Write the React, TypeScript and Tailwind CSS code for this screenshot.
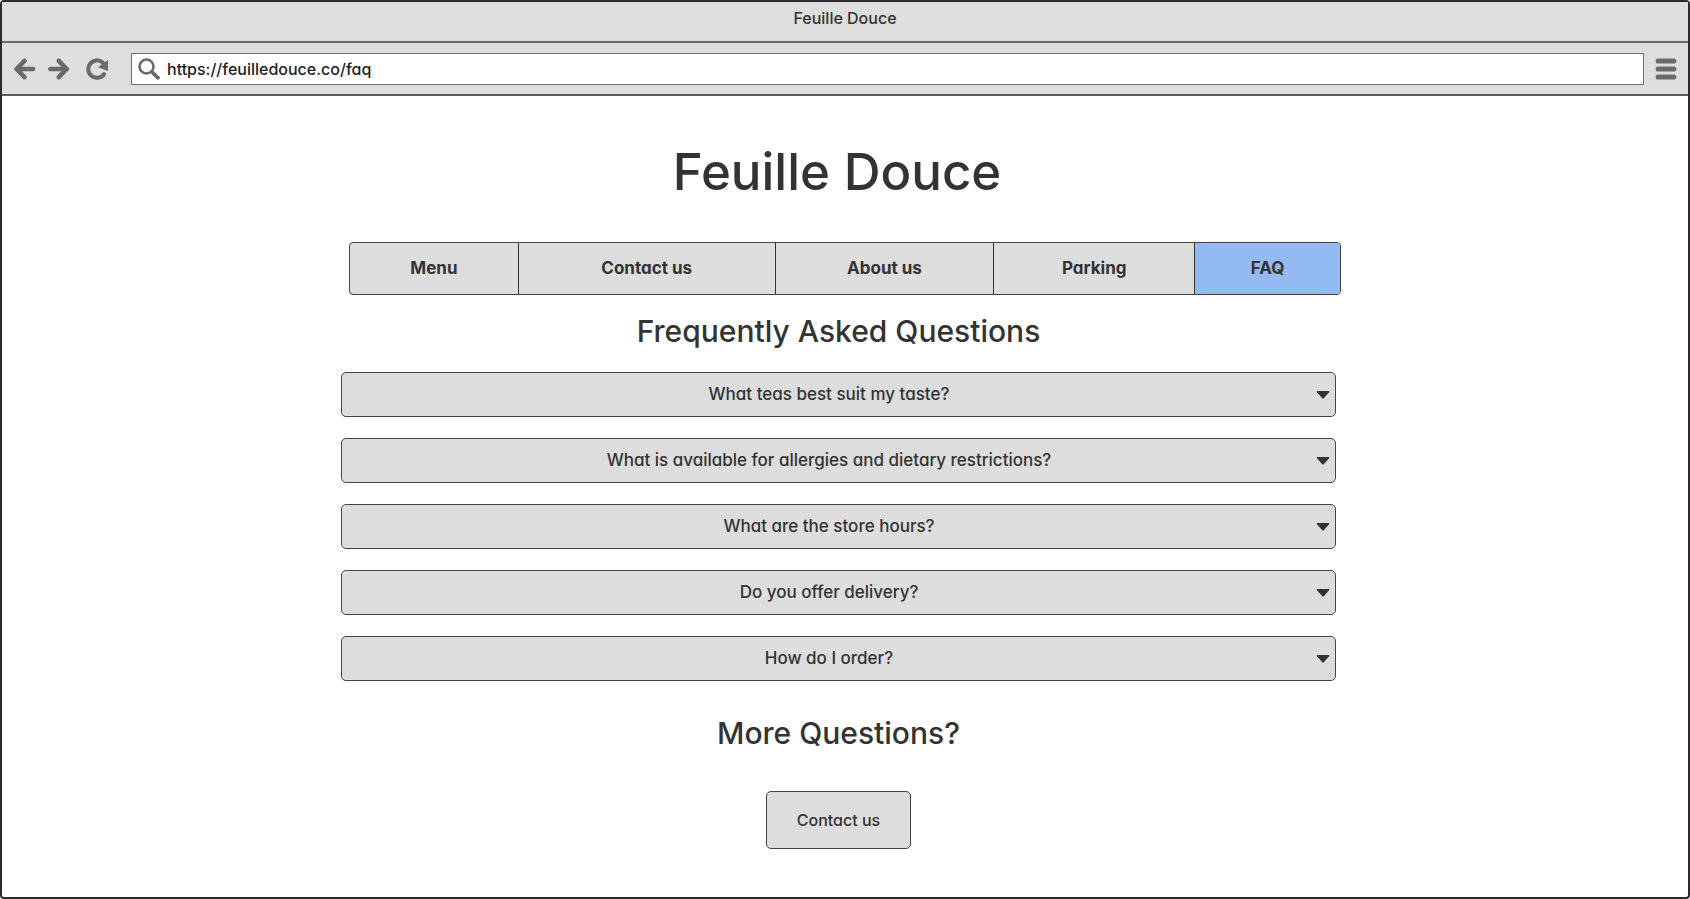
const links = ["Menu", "Contact us", "About us", "Parking", "FAQ"];

const questions = [
  "What teas best suit my taste?",
  "What is available for allergies and dietary restrictions?",
  "What are the store hours?",
  "Do you offer delivery?",
  "How do I order?",
];

function BrowserBar() {
  return (
    <header className="bg-[#dededd]">
      <div className="h-[41px] border-b-2 border-[#6a6a6a] pt-1 text-center text-base leading-6 font-medium">
        Feuille Douce
      </div>
      <div className="flex h-[53px] items-center border-b-2 border-[#5c5c5c] pl-3 pr-[11px] text-[#6a6a6a]">
        <button type="button" aria-label="Back">
          <svg viewBox="0 0 22 22" className="size-[22px]" fill="none" stroke="currentColor" strokeWidth="4.6" strokeLinecap="round" strokeLinejoin="round">
            <path d="M19 11H4M10.5 2.8L2.6 11l7.9 8.2" />
          </svg>
        </button>
        <button type="button" aria-label="Forward" className="ml-3">
          <svg viewBox="0 0 22 22" className="size-[22px]" fill="none" stroke="currentColor" strokeWidth="4.6" strokeLinecap="round" strokeLinejoin="round">
            <path d="M2.3 11h15M10.8 2.8L18.7 11l-7.9 8.2" />
          </svg>
        </button>
        <button type="button" aria-label="Reload" className="ml-4">
          <svg viewBox="0 0 22 22" className="size-[22px]" fill="none">
            <path d="M18 16.2A8.7 8.7 0 1 1 17 4.8" stroke="currentColor" strokeWidth="4" strokeLinecap="round" />
            <path d="M22 2v11L12 9.3z" fill="currentColor" />
          </svg>
        </button>
        <label className="ml-[23px] flex h-8 flex-1 items-center border border-[#6f6f6f] bg-white pl-[6px]">
          <svg viewBox="0 0 22 22" className="size-[22px]" fill="none" stroke="currentColor">
            <circle cx="8.5" cy="8.5" r="7" strokeWidth="2.6" />
            <path d="M14 14l6 5.8" strokeWidth="3.8" strokeLinecap="round" />
          </svg>
          <input
            type="text"
            aria-label="Address"
            defaultValue="https://feuilledouce.co/faq"
            className="ml-[7px] flex-1 pt-px text-base font-medium text-[#222] outline-none"
          />
        </label>
        <button type="button" aria-label="Browser menu" className="ml-[11px]">
          <svg viewBox="0 0 22 22" className="size-[22px]" stroke="currentColor" strokeWidth="5.2" strokeLinecap="round">
            <path d="M3.2 3h15.6M3.2 11h15.6M3.2 19h15.6" />
          </svg>
        </button>
      </div>
    </header>
  );
}

function Nav() {
  return (
    <nav className="grid h-[53px] grid-cols-[169fr_257fr_219fr_201fr_145fr] divide-x divide-[#333] overflow-hidden rounded-[4px] border border-[#444] bg-[#ddd]">
      {links.map((link) => (
        <a
          key={link}
          href="#"
          className={`flex items-center justify-center text-[17px] font-bold ${
            link === "FAQ" ? "bg-[#94baf3]" : ""
          }`}
        >
          {link}
        </a>
      ))}
    </nav>
  );
}

function Question({ text }: { text: string }) {
  return (
    <button
      type="button"
      className="flex h-[45px] w-full items-center rounded-[5px] border border-[#444] bg-[#ddd] pr-[5px]"
    >
      <span className="flex-1 text-center text-[17px] font-medium">{text}</span>
      <svg viewBox="0 0 14 8" className="h-2 w-[14px]" fill="#333">
        <path d="M1.5 0h11q1.5 0 .5 1.3L8 7q-1 1-2 0L1 1.3Q0 0 1.5 0z" />
      </svg>
    </button>
  );
}

export default function App() {
  return (
    <div className="flex min-h-screen flex-col rounded-[4px] border-2 border-[#2c2a2b] bg-white font-['Inter','Liberation_Sans',sans-serif] text-[#333] [font-feature-settings:'cv11']">
      <BrowserBar />
      <main className="mx-auto w-full max-w-[992px] flex-1">
        <h1 className="mt-11 pr-4 text-center text-[51px] font-medium leading-[64px]">
          Feuille Douce
        </h1>
        <div className="mt-[38px]">
          <Nav />
        </div>
        <section className="-ml-2 mr-[5px]">
          <h2 className="mt-4 text-center text-[30px] font-medium leading-10">
            Frequently Asked Questions
          </h2>
          <div className="mt-[21px] flex flex-col gap-[21px]">
            {questions.map((question) => (
              <Question key={question} text={question} />
            ))}
          </div>
          <h2 className="mt-8 text-center text-[30px] font-medium leading-10">
            More Questions?
          </h2>
          <div className="mt-[38px] flex justify-center">
            <button
              type="button"
              className="h-[58px] rounded-[5px] border border-[#444] bg-[#ddd] px-[30px] text-base font-medium"
            >
              Contact us
            </button>
          </div>
        </section>
      </main>
    </div>
  );
}
